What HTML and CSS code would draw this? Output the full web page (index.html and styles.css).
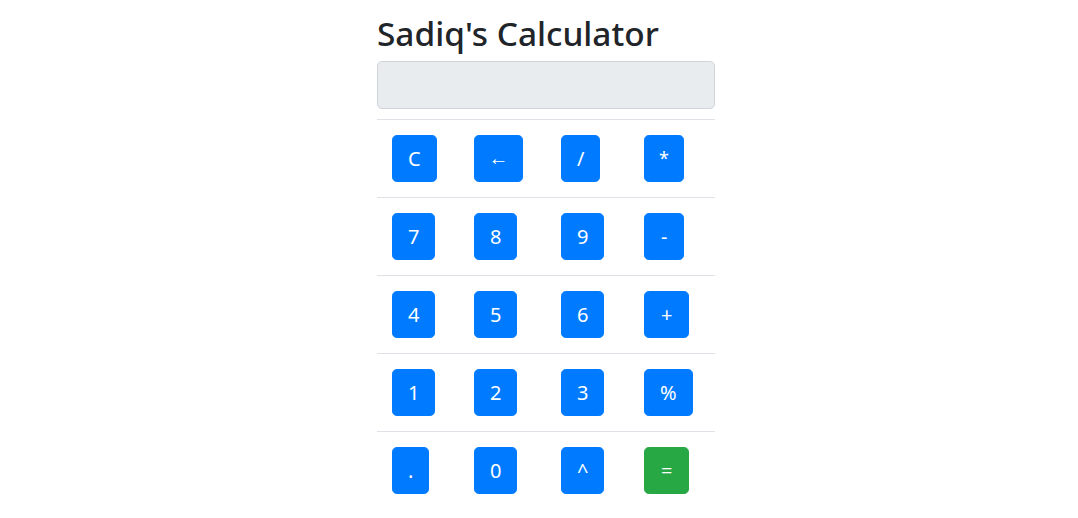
FILE: index.html
```html
<!DOCTYPE html>
<html lang="en">
<head>
<meta charset="utf-8">
<title>Sadiq's Calculator</title>
<link rel="stylesheet" href="styles.css">
</head>
<body>
<div class="calc">
  <h2 class="title">Sadiq's Calculator</h2>
  <input class="display" type="text" readonly>
  <table class="keys">
    <colgroup>
      <col class="col-1">
      <col class="col-2">
      <col class="col-3">
      <col class="col-4">
    </colgroup>
    <tr>
      <td><button class="btn">C</button></td>
      <td><button class="btn btn-arrow">&larr;</button></td>
      <td><button class="btn">/</button></td>
      <td><button class="btn btn-star">*</button></td>
    </tr>
    <tr>
      <td><button class="btn">7</button></td>
      <td><button class="btn">8</button></td>
      <td><button class="btn">9</button></td>
      <td><button class="btn btn-wide">-</button></td>
    </tr>
    <tr>
      <td><button class="btn">4</button></td>
      <td><button class="btn">5</button></td>
      <td><button class="btn">6</button></td>
      <td><button class="btn btn-wide">+</button></td>
    </tr>
    <tr>
      <td><button class="btn">1</button></td>
      <td><button class="btn">2</button></td>
      <td><button class="btn">3</button></td>
      <td><button class="btn">%</button></td>
    </tr>
    <tr>
      <td><button class="btn">.</button></td>
      <td><button class="btn">0</button></td>
      <td><button class="btn">^</button></td>
      <td><button class="btn btn-success btn-wide">=</button></td>
    </tr>
  </table>
</div>
</body>
</html>
```
FILE: styles.css
```css
html, body {
  margin: 0;
  padding: 0;
  background: #fff;
}
body {
  font-family: "Noto Sans", "Open Sans", sans-serif;
  font-size: 16px;
  line-height: 1.5;
  color: #212529;
}
.calc {
  width: 338px;
  margin-left: calc(50% - 162px);
  padding-top: 13px;
}
.title {
  font-size: 33.4px;
  font-weight: 500;
  line-height: 1.2;
  margin: 0 0 8px 0;
}
.display {
  display: block;
  box-sizing: border-box;
  width: 100%;
  height: 48px;
  margin: 0 0 10px 0;
  padding: 8px 16px;
  font-size: 20px;
  font-family: inherit;
  background: #e9ecef;
  border: 1px solid #ced4da;
  border-radius: 4.8px;
  outline: none;
}
.keys {
  width: 338px;
  table-layout: fixed;
  border-collapse: collapse;
}
.col-1 { width: 82px; }
.col-2 { width: 87px; }
.col-3 { width: 83px; }
.col-4 { width: 86px; }
.keys td {
  border-top: 1px solid #dee2e6;
  padding: 15px;
  vertical-align: top;
}
.btn {
  display: block;
  box-sizing: border-box;
  height: 47px;
  padding: 0 15px;
  font-family: inherit;
  font-size: 20px;
  line-height: 45px;
  color: #fff;
  background: #007bff;
  border: 1px solid #007bff;
  border-radius: 4.8px;
}
.btn-arrow {
  padding: 0 13.5px 2px;
  line-height: 43px;
}
.btn-star {
  padding: 0 14px;
  font-size: 18px;
}
.btn-wide {
  padding: 0 16px;
}
.btn-success {
  background: #28a745;
  border-color: #28a745;
}
```
